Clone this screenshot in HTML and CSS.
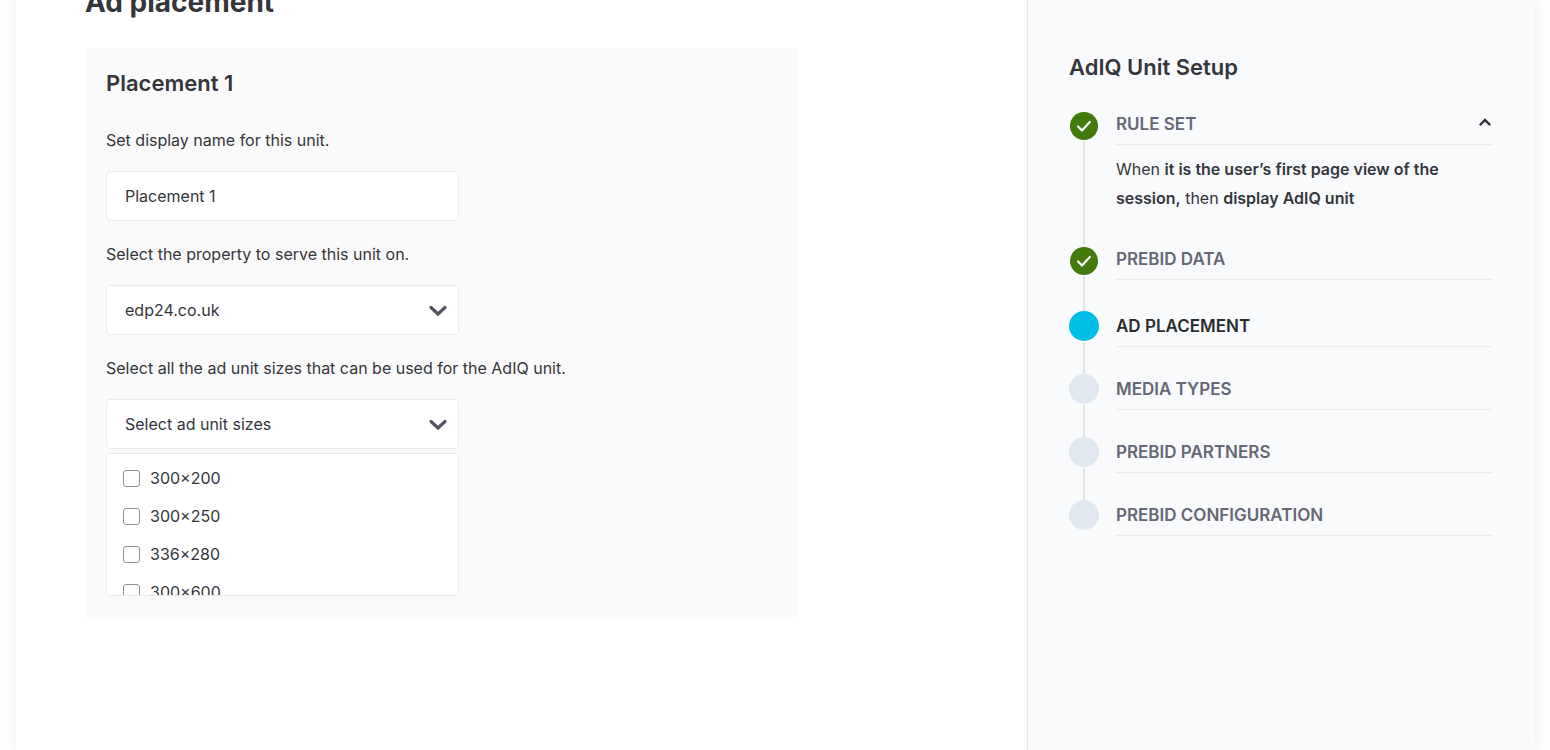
FILE: index.html
```html
<!DOCTYPE html>
<html lang="en">
<head>
<meta charset="utf-8">
<meta name="viewport" content="width=device-width, initial-scale=1">
<title>Ad placement</title>
<link rel="stylesheet" href="styles.css">
</head>
<body>
<div class="shell">
  <main class="content">
    <h1 class="page-title">Ad placement</h1>
    <section class="card">
      <h2 class="heading card-title">Placement 1</h2>
      <div class="field">
        <label class="field-label" for="unit-name">Set display name for this unit.</label>
        <input class="control" id="unit-name" type="text" value="Placement 1">
      </div>
      <div class="field">
        <label class="field-label" for="property">Select the property to serve this unit on.</label>
        <div class="control-wrap">
          <select class="control" id="property"><option>edp24.co.uk</option></select>
          <svg class="chevron" viewBox="0 0 18 12" aria-hidden="true"><path d="M2 2.500 9 9l7-6.500"/></svg>
        </div>
      </div>
      <div class="field">
        <label class="field-label" for="sizes">Select all the ad unit sizes that can be used for the AdIQ unit.</label>
        <div class="control-wrap">
          <button class="control" id="sizes" type="button" aria-expanded="true">Select ad unit sizes</button>
          <svg class="chevron" viewBox="0 0 18 12" aria-hidden="true"><path d="M2 2.500 9 9l7-6.500"/></svg>
        </div>
        <div class="options">
          <label class="option"><input class="check" type="checkbox"><span>300×200</span></label>
          <label class="option"><input class="check" type="checkbox"><span>300×250</span></label>
          <label class="option"><input class="check" type="checkbox"><span>336×280</span></label>
          <label class="option"><input class="check" type="checkbox"><span>300×600</span></label>
        </div>
      </div>
    </section>
  </main>
  <aside class="sidebar">
    <h2 class="heading">AdIQ Unit Setup</h2>
    <ol class="steps">
      <li class="step step-done">
        <div class="rail"><span class="dot"><svg class="tick" viewBox="0 0 28 28" aria-hidden="true"><path d="m8 14.500 4 4L19.800 10"/></svg></span></div>
        <div class="step-main">
          <button class="step-name" type="button" aria-expanded="true">RULE SET
            <svg class="caret" viewBox="0 0 12 8" aria-hidden="true"><path d="M1.500 6.500 6 2l4.500 4.500"/></svg>
          </button>
          <p class="step-text">When <b>it is the user’s first page view of the session,</b> then <b>display AdIQ unit</b></p>
        </div>
      </li>
      <li class="step step-done">
        <div class="rail"><span class="dot"><svg class="tick" viewBox="0 0 28 28" aria-hidden="true"><path d="m8 14.500 4 4L19.800 10"/></svg></span></div>
        <div class="step-main"><button class="step-name" type="button">PREBID DATA</button></div>
      </li>
      <li class="step step-current" aria-current="step">
        <div class="rail"><span class="dot"></span></div>
        <div class="step-main"><button class="step-name" type="button">AD PLACEMENT</button></div>
      </li>
      <li class="step">
        <div class="rail"><span class="dot"></span></div>
        <div class="step-main"><button class="step-name" type="button">MEDIA TYPES</button></div>
      </li>
      <li class="step">
        <div class="rail"><span class="dot"></span></div>
        <div class="step-main"><button class="step-name" type="button">PREBID PARTNERS</button></div>
      </li>
      <li class="step">
        <div class="rail"><span class="dot"></span></div>
        <div class="step-main"><button class="step-name" type="button">PREBID CONFIGURATION</button></div>
      </li>
    </ol>
  </aside>
</div>
</body>
</html>
```
FILE: styles.css
```css
* { box-sizing: border-box; }
body {
  margin: 0;
  background: #fefefe;
  color: #35363b;
  font: 400 16px/24px Inter, "Liberation Sans", sans-serif;
}
h1, h2, p, ol { margin: 0; padding: 0; }
button, input, select { font: inherit; color: inherit; }

.shell {
  display: grid;
  grid-template-columns: 1fr 508px;
  min-height: 100vh;
  margin: 0 15px 0 16px;
  background: #fff;
  box-shadow: 0 0 14px rgba(0, 0, 0, 0.08);
  overflow: hidden;
}
.content { padding: 0 69px; }
.page-title {
  margin: -14px 0 30px;
  font-size: 28px;
  line-height: 32px;
  font-weight: 700;
}
.heading { font-size: 22px; line-height: 28px; font-weight: 600; }

.card {
  max-width: 714px;
  padding: 21px;
  background: #fafafa;
}
.card-title { margin-bottom: 31px; }
.field + .field { margin-top: 21px; }
.field-label { display: block; margin-bottom: 19px; }
.control-wrap { position: relative; max-width: 353px; }
.control {
  display: block;
  width: 100%;
  max-width: 353px;
  height: 50px;
  padding: 0 18px;
  border: 1px solid #e9eaec;
  border-radius: 4px;
  background: #fff;
  text-align: left;
  appearance: none;
}
.chevron {
  position: absolute;
  top: 20px;
  right: 12px;
  width: 18px;
  height: 12px;
  fill: none;
  stroke: #555463;
  stroke-width: 3.2;
  stroke-linecap: round;
  pointer-events: none;
}
.options {
  max-width: 353px;
  height: 143px;
  margin-top: 4px;
  padding: 5px 16px;
  border: 1px solid #e9eaec;
  border-radius: 4px;
  background: #fff;
  overflow-y: auto;
  scrollbar-width: none;
}
.option { display: flex; align-items: center; gap: 10px; height: 38px; }
.check {
  width: 17px;
  height: 17px;
  margin: 0;
  border: 1px solid #909298;
  border-radius: 3px;
  background: #fff;
  appearance: none;
}
.check:checked { background: #00bfe6; }

.sidebar {
  padding: 53px 43px 43px 41px;
  border-left: 1px solid #e3e6ea;
  background: #f8fafc;
}
.steps { margin-top: 28px; list-style: none; }
.step { display: flex; gap: 17px; }
.rail {
  display: flex;
  flex: none;
  flex-direction: column;
  align-items: center;
  gap: 1px;
  width: 30px;
}
.step:not(:last-child) .rail::after {
  content: "";
  flex: 1;
  width: 2px;
  background: #e2e3e7;
}
.dot {
  width: 30px;
  height: 30px;
  border-radius: 50%;
  background: #e2e8f0;
}
.step-done .dot {
  width: 28px;
  height: 28px;
  margin-top: 3px;
  background: #437a0c;
}
.step-current .dot { background: #00bfe6; }
.tick {
  display: block;
  fill: none;
  stroke: #fff;
  stroke-width: 2.2;
  stroke-linecap: round;
  stroke-linejoin: round;
}
.step-main { flex: 1; min-width: 0; padding: 3px 0 27px; }
.step-done .step-main { padding-bottom: 31px; }
.step-name {
  display: flex;
  align-items: center;
  justify-content: space-between;
  width: 100%;
  padding: 0 0 8px;
  border: 0;
  border-bottom: 1px solid #e8eaed;
  background: none;
  color: #656874;
  font-size: 17px;
  font-weight: 600;
  text-align: left;
}
.step-current .step-name { color: #2b2c30; }
.caret {
  width: 12px;
  height: 8px;
  margin: 0 1px 4px 0;
  fill: none;
  stroke: #2b2c30;
  stroke-width: 2.4;
  stroke-linecap: round;
}
.step-text { margin-top: 10px; line-height: 29px; }
.step-text b { font-weight: 600; }
```
